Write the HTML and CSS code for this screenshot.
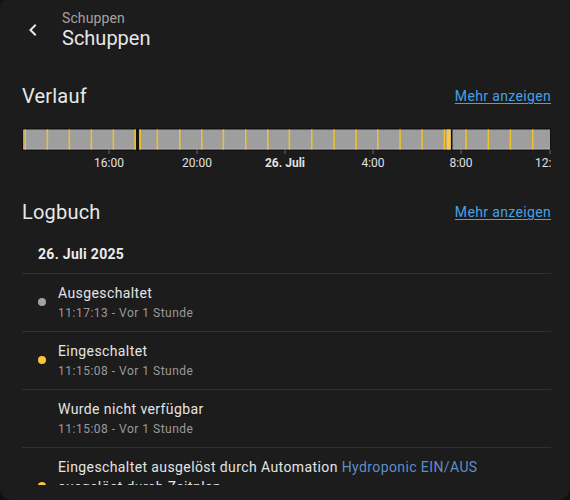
FILE: index.html
```html
<!DOCTYPE html>
<html lang="de">
<head>
<meta charset="utf-8">
<link rel="stylesheet" href="styles.css">
</head>
<body>
<div class="dialog">
 <div class="content">
  <header class="topbar">
    <span class="back">
      <svg viewBox="0 0 24 24" width="24" height="24"><path d="M15.41,16.58L10.83,12L15.41,7.41L14,6L8,12L14,18L15.41,16.58Z" fill="#e8e8e8"/></svg>
    </span>
    <div class="titles">
      <div class="subtitle">Schuppen</div>
      <div class="title">Schuppen</div>
    </div>
  </header>

  <section class="section">
    <div class="section-head">
      <h2>Verlauf</h2>
      <a class="more" href="#">Mehr anzeigen</a>
    </div>
    <svg class="timeline" width="529" height="44" viewBox="0 0 529 44">
      <rect x="0" y="0" width="529" height="23" fill="#121212"/>
      <rect x="1" y="1.5" width="527" height="19.5" fill="#9e9e9e"/>
      <rect x="1" y="20.5" width="527" height="1" fill="#b8b8b8"/>
      <rect x="114" y="0" width="3" height="23" fill="#121212"/>
      <rect x="429" y="0" width="1.5" height="23" fill="#121212"/>
      <g fill="#f5c11e">
        <rect x="2.5" y="1.5" width="1.5" height="20"/>
        <rect x="24.6" y="1.5" width="1.5" height="20"/>
        <rect x="46.6" y="1.5" width="1.5" height="20"/>
        <rect x="68.6" y="1.5" width="1.5" height="20"/>
        <rect x="90.6" y="1.5" width="1.5" height="20"/>
        <rect x="112.3" y="1.5" width="1.5" height="20"/>
        <rect x="117.4" y="1.5" width="1.5" height="20"/>
        <rect x="134.6" y="1.5" width="1.5" height="20"/>
        <rect x="157" y="1.5" width="1.5" height="20"/>
        <rect x="179" y="1.5" width="1.5" height="20"/>
        <rect x="200.6" y="1.5" width="1.5" height="20"/>
        <rect x="223" y="1.5" width="1.5" height="20"/>
        <rect x="245" y="1.5" width="1.5" height="20"/>
        <rect x="266.6" y="1.5" width="1.5" height="20"/>
        <rect x="289" y="1.5" width="1.5" height="20"/>
        <rect x="311.3" y="1.5" width="1.5" height="20"/>
        <rect x="333.3" y="1.5" width="1.5" height="20"/>
        <rect x="355" y="1.5" width="1.5" height="20"/>
        <rect x="377.3" y="1.5" width="1.5" height="20"/>
        <rect x="399.3" y="1.5" width="1.5" height="20"/>
        <rect x="421.6" y="1.5" width="1.5" height="20"/>
        <rect x="424.6" y="1.5" width="4" height="20" fill="#f7c84a"/>
        <rect x="443.3" y="1.5" width="1.5" height="20"/>
        <rect x="465.6" y="1.5" width="1.5" height="20"/>
        <rect x="487.6" y="1.5" width="1.5" height="20"/>
        <rect x="510" y="1.5" width="1.5" height="20"/>
      </g>
      <g fill="#6a6a6a">
        <rect x="86.5" y="22" width="1" height="4"/>
        <rect x="174.5" y="22" width="1" height="4"/>
        <rect x="262.5" y="22" width="1" height="4"/>
        <rect x="350.5" y="22" width="1" height="4"/>
        <rect x="438.5" y="22" width="1" height="4"/>
        <rect x="527.5" y="22" width="1" height="4"/>
      </g>
      <g class="ticks" text-anchor="middle">
        <text x="87" y="39">16:00</text>
        <text x="175" y="39">20:00</text>
        <text x="263" y="39" class="bold">26. Juli</text>
        <text x="351" y="39">4:00</text>
        <text x="439" y="39">8:00</text>
        <text x="528" y="39">12:00</text>
      </g>
    </svg>
  </section>

  <section class="section logbook">
    <div class="section-head">
      <h2>Logbuch</h2>
      <a class="more" href="#">Mehr anzeigen</a>
    </div>
    <div class="date">26. Juli 2025</div>
    <ul class="entries">
      <li class="entry">
        <span class="dot off"></span>
        <div class="entry-text">
          <div class="entry-title">Ausgeschaltet</div>
          <div class="entry-time">11:17:13 - Vor 1 Stunde</div>
        </div>
      </li>
      <li class="entry">
        <span class="dot on"></span>
        <div class="entry-text">
          <div class="entry-title">Eingeschaltet</div>
          <div class="entry-time">11:15:08 - Vor 1 Stunde</div>
        </div>
      </li>
      <li class="entry">
        <span class="dot none"></span>
        <div class="entry-text">
          <div class="entry-title">Wurde nicht verfügbar</div>
          <div class="entry-time">11:15:08 - Vor 1 Stunde</div>
        </div>
      </li>
      <li class="entry">
        <span class="dot on"></span>
        <div class="entry-text">
          <div class="entry-title">Eingeschaltet ausgelöst durch Automation <a class="ref" href="#">Hydroponic EIN/AUS</a><br>ausgelöst durch Zeitplan</div>
          <div class="entry-time">11:15:00 - Vor 1 Stunde</div>
        </div>
      </li>
    </ul>
  </section>
 </div>
</div>
</body>
</html>
```
FILE: styles.css
```css
* { box-sizing: border-box; }
html, body {
  margin: 0;
  padding: 0;
  background: #111111;
}
body {
  font-family: Roboto, "Noto Sans", sans-serif;
  color: #e1e1e1;
  width: 570px;
  height: 500px;
  overflow: hidden;
}
.dialog {
  background: #1c1c1c;
  width: 570px;
  height: 500px;
  border-radius: 6px 0 12px 12px;
  overflow: hidden;
}
.content {
  height: 485px;
  overflow: hidden;
}
.topbar {
  display: flex;
  align-items: center;
  gap: 17px;
  padding: 10px 0 0 21px;
  height: 50px;
}
.back { display: flex; width: 24px; height: 24px; }
.titles { display: flex; flex-direction: column; }
.subtitle {
  font-size: 14px;
  line-height: 16px;
  letter-spacing: 0.1px;
  color: #a3a3a3;
}
.title {
  font-size: 20px;
  line-height: 24px;
  color: #e6e6e6;
}
.section {
  padding: 0 19px 0 22px;
}
.section-head {
  display: flex;
  justify-content: space-between;
  align-items: center;
  height: 28px;
  margin-top: 32px;
  margin-bottom: 18px;
}
.section-head h2 {
  margin: 0;
  font-size: 20px;
  font-weight: 400;
  letter-spacing: 0.2px;
  color: #e8e8e8;
}
.more {
  font-size: 14px;
  color: #47a1e6;
  text-decoration: underline;
  text-underline-offset: 2px;
  letter-spacing: 0.35px;
}
.timeline {
  display: block;
  overflow: hidden;
}
.ticks text {
  font-family: Roboto, sans-serif;
  font-size: 12px;
  fill: #e0e0e0;
}
.ticks text.bold { font-weight: 700; }
.logbook .section-head { margin-top: 26px; margin-bottom: 0; }
.date {
  padding: 18px 0 9px 16px;
  font-size: 14px;
  line-height: 20px;
  font-weight: 700;
  letter-spacing: 0.3px;
  color: #ececec;
}
.entries {
  list-style: none;
  margin: 0;
  padding: 0;
}
.entry {
  display: flex;
  align-items: center;
  gap: 12px;
  border-top: 1px solid #303030;
  padding: 9px 0 10px 16px;
}
.dot {
  width: 8px;
  height: 8px;
  border-radius: 50%;
  flex: none;
}
.dot.off { background: #a2a2a2; }
.dot.on { background: #f8c63c; }
.dot.none { background: transparent; }
.entry-text { display: flex; flex-direction: column; gap: 2px; }
.entry-title {
  font-size: 14px;
  line-height: 20px;
  letter-spacing: 0.4px;
  color: #e4e4e4;
}
.entry-time {
  font-size: 12px;
  line-height: 16px;
  letter-spacing: 0.5px;
  color: #9a9a9a;
}
.ref {
  color: #5f8ec8;
  text-decoration: none;
}
```
